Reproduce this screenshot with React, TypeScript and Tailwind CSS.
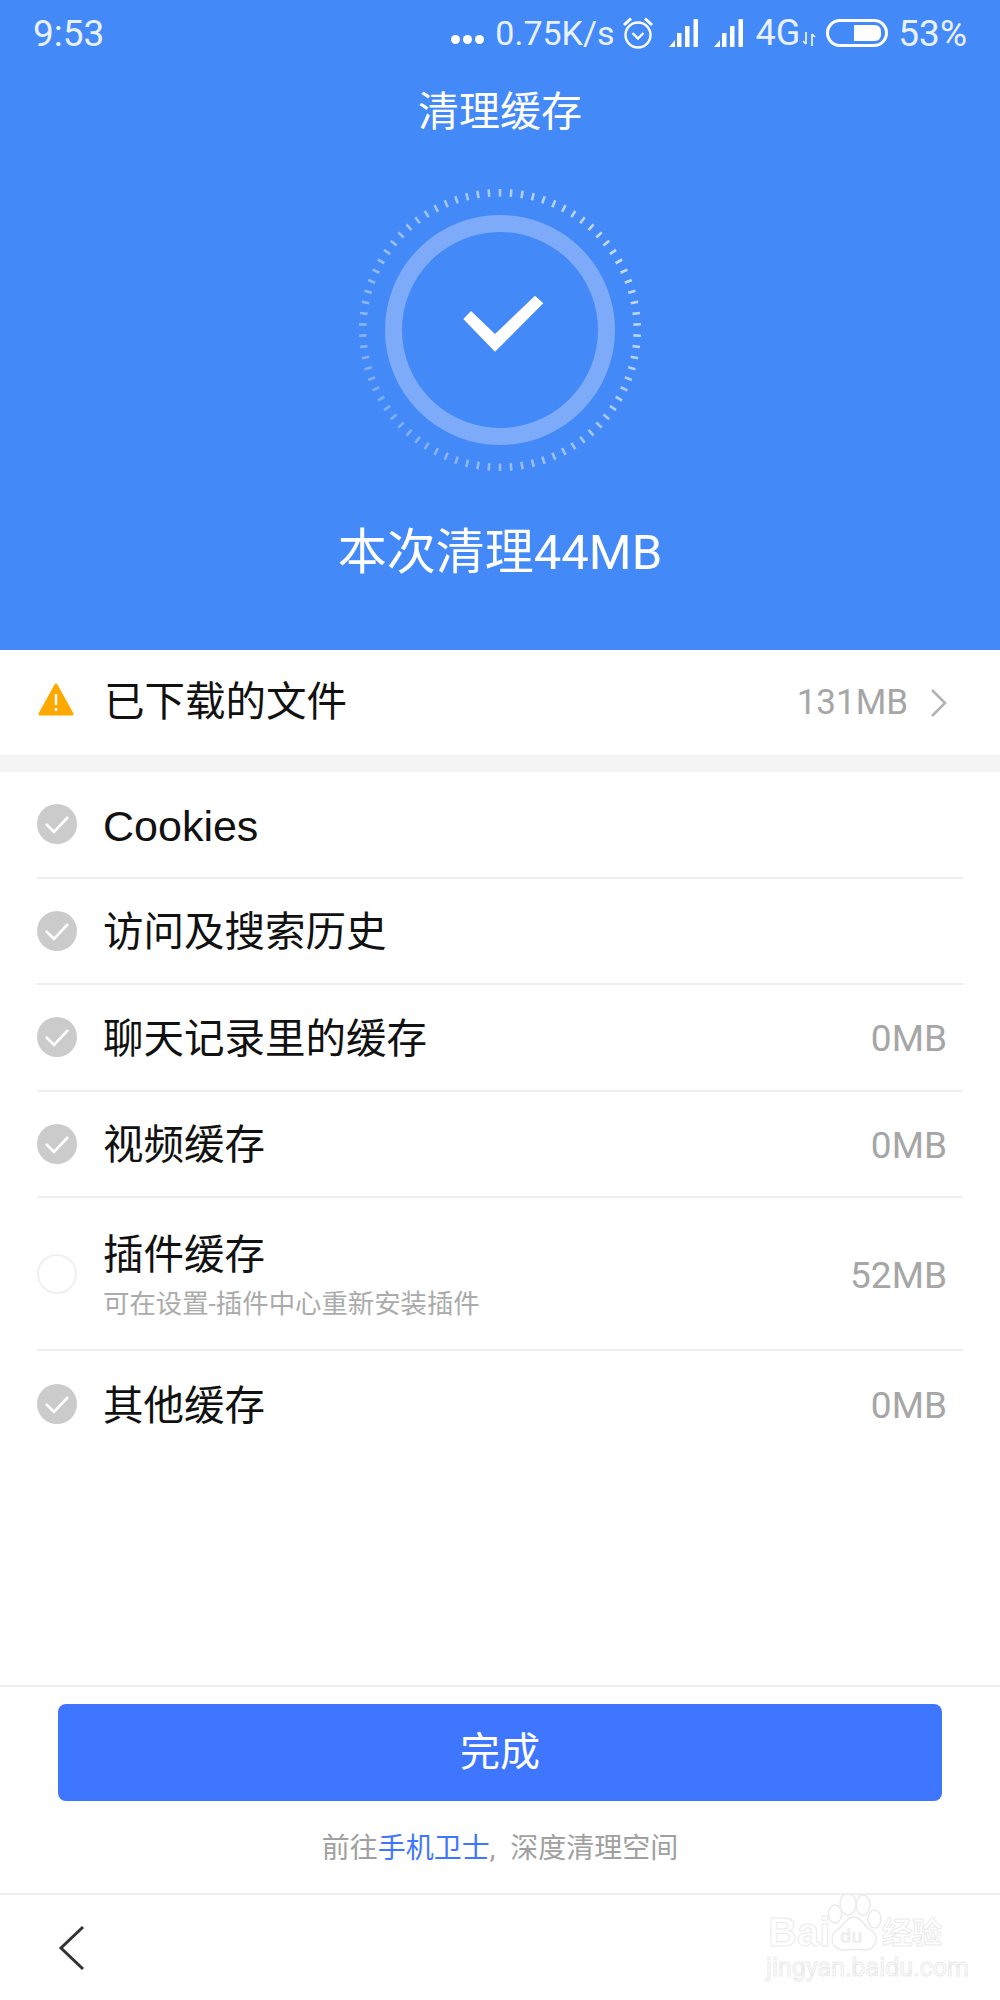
const font = "font-['Roboto','Noto_Sans_CJK_SC',sans-serif]";

const rows = [
  { name: "Cookies", checked: true },
  { name: "访问及搜索历史", checked: true },
  { name: "聊天记录里的缓存", size: "0MB", checked: true },
  { name: "视频缓存", size: "0MB", checked: true },
  { name: "插件缓存", sub: "可在设置-插件中心重新安装插件", size: "52MB", checked: false },
  { name: "其他缓存", size: "0MB", checked: true, last: true },
];

function Signal() {
  return (
    <svg width="30" height="28" viewBox="0 0 30 28" fill="white">
      <path d="M0 28 L6 21 V28 Z" />
      <rect x="8" y="14" width="4.5" height="14" />
      <rect x="16" y="7" width="4.5" height="21" />
      <rect x="24.5" y="0" width="4.5" height="28" rx="1" />
    </svg>
  );
}

function StatusBar() {
  return (
    <div className="flex h-[66px] items-center justify-between pl-[33px] pr-[33px] text-[#e9f1ff]">
      <span className="text-[37px] leading-none">9:53</span>
      <div className="flex items-center">
        <div className="flex gap-[3px] pt-[12px]">
          <span className="h-[9px] w-[9px] rounded-full bg-white" />
          <span className="h-[9px] w-[9px] rounded-full bg-white" />
          <span className="h-[9px] w-[9px] rounded-full bg-white" />
        </div>
        <span className="ml-[11px] text-[34px] leading-none">0.75K/s</span>
        <svg className="ml-[7px]" width="32" height="34" viewBox="0 0 32 34" fill="none" stroke="white" strokeWidth="2.4">
          <circle cx="16" cy="19" r="12.5" />
          <path d="M10.5 17 L16 22.5 L21.5 17" />
          <path d="M2 9 L9 2.5 M30 9 L23 2.5" strokeWidth="3" />
        </svg>
        <div className="ml-[15px]"><Signal /></div>
        <div className="ml-[15px]"><Signal /></div>
        <span className="ml-[12px] text-[36px] leading-none">4G</span>
        <svg className="ml-[2px] mt-[12px]" width="14" height="14" viewBox="0 0 14 14" fill="none" stroke="white" strokeWidth="1.5">
          <path d="M4 0 V12 M1 9 L4 12 M10 14 V2 M13 5 L10 2" />
        </svg>
        <div className="ml-[10px] flex h-[28px] w-[62px] items-center justify-end rounded-full border-[3px] border-white pr-[4px]">
          <span className="h-[16px] w-[27px] rounded-r-[6px] bg-white" />
        </div>
        <span className="ml-[10px] text-[37px] leading-none">53%</span>
      </div>
    </div>
  );
}

function Dial() {
  const ticks = Array.from({ length: 78 }, (_, i) => i);
  return (
    <svg width="300" height="300" viewBox="0 0 300 300">
      {ticks.map((i) => {
        const angle = (i * 360) / 78;
        // the ticks fade out going round from the top right to the bottom left
        const dist = Math.abs(((angle - 60 + 540) % 360) - 180);
        const opacity = 0.7 - (0.4 * (180 - dist)) / 180;
        return (
          <rect
            key={i}
            x="148.7"
            y="9"
            width="2.6"
            height="7.5"
            fill="white"
            opacity={opacity}
            transform={`rotate(${angle + 180} 150 150)`}
          />
        );
      })}
      <circle cx="150" cy="150" r="106.5" fill="none" stroke="#7dabf9" strokeWidth="17" />
      <path d="M113.3 139 L145 171.7 L193.3 123.3 L185 115.7 L145 154 L121 131 Z" fill="white" />
    </svg>
  );
}

function CheckCircle({ checked }: { checked: boolean }) {
  if (!checked) return <span className="h-[40px] w-[40px] shrink-0 rounded-full border-2 border-[#f0f0f0]" />;
  return (
    <svg className="shrink-0" width="40" height="40" viewBox="0 0 40 40">
      <circle cx="20" cy="20" r="20" fill="#cbcbcb" />
      <path d="M9 20 L17 28 L31 13" fill="none" stroke="white" strokeWidth="2.6" />
    </svg>
  );
}

function Watermark() {
  return (
    <div className="absolute left-[760px] top-[1885px] h-[105px] w-[200px] text-white [-webkit-text-stroke:1px_#ebebeb]">
      <svg className="absolute left-[68px] top-[8px]" width="54" height="58" viewBox="0 0 54 58" fill="none" stroke="#ebebeb" strokeWidth="1.5">
        <ellipse cx="7" cy="21" rx="6.5" ry="9" />
        <ellipse cx="20" cy="11" rx="8" ry="11" />
        <ellipse cx="35" cy="12" rx="7" ry="10" />
        <ellipse cx="46.5" cy="26" rx="6.5" ry="9" />
        <path d="M26 24 C18 24 16 33 9 37 C0 43 4 57 16 57 C22 57 30 56 36 57 C48 57 52 44 44 38 C36 34 34 24 26 24 Z" />
      </svg>
      <span className="absolute left-[8px] top-[27px] font-['Liberation_Sans',sans-serif] text-[40px] font-bold leading-none">Bai</span>
      <span className="absolute left-[80px] top-[41px] text-[20px] font-bold leading-none text-[#eeeeee] [-webkit-text-stroke:0px]">du</span>
      <span className="absolute left-[122px] top-[33px] text-[30px] font-bold leading-none">经验</span>
      <span className="absolute left-[6px] top-[70px] text-[25px] leading-none">jingyan.baidu.com</span>
    </div>
  );
}

export default function App() {
  return (
    <div className={`relative flex h-[2000px] w-[1000px] flex-col bg-white ${font}`}>
      <header className="flex h-[650px] shrink-0 flex-col bg-[#4489f8]">
        <StatusBar />
        <h1 className="mt-[26px] text-center text-[41px] font-normal leading-[40px] text-white">清理缓存</h1>
        <div className="mt-[48px] flex justify-center">
          <Dial />
        </div>
        <p className="mt-[45px] text-center text-[49px] leading-[56px] text-white">本次清理44MB</p>
      </header>

      <div className="flex h-[105px] shrink-0 items-center pl-[38px] pr-[51px]">
        <svg className="mb-[5px]" width="36" height="34" viewBox="0 0 36 34">
          <path d="M18 2 L34 31 H2 Z" fill="#ffa900" stroke="#ffa900" strokeWidth="3" strokeLinejoin="round" />
          <rect x="16.8" y="11" width="2.4" height="11" fill="white" />
          <rect x="16.8" y="25" width="2.4" height="3" fill="white" />
        </svg>
        <span className="ml-[30px] text-[40.5px] leading-none text-[#111111]">已下载的文件</span>
        <span className="ml-auto text-[35px] leading-none text-[#a6a6a6]">131MB</span>
        <svg className="ml-[21px]" width="20" height="32" viewBox="0 0 20 32" fill="none" stroke="#b3b3b3" strokeWidth="2.6">
          <path d="M3 3 L16 16 L3 29" />
        </svg>
      </div>
      <div className="h-[17px] shrink-0 bg-[#f4f4f4]" />

      <div className="flex-1 px-[37px]">
        {rows.map((row) => (
          <div
            key={row.name}
            className={`flex items-center ${row.sub ? "h-[153px]" : "h-[106.5px]"} ${row.last ? "" : "border-b-2 border-[#eeeeee]"}`}
          >
            <CheckCircle checked={row.checked} />
            <div className="ml-[26px] flex flex-col pt-[3px]">
              <span className={`leading-[48px] text-[#111111] ${row.name === "Cookies" ? "font-['Liberation_Sans',sans-serif] text-[43px]" : "text-[40.5px]"}`}>{row.name}</span>
              {row.sub && <span className="mt-[9px] text-[26.4px] leading-[32px] text-[#ababab]">{row.sub}</span>}
            </div>
            {row.size && <span className="ml-auto pr-[16px] pt-[3px] text-[37px] leading-none text-[#a6a6a6]">{row.size}</span>}
          </div>
        ))}
      </div>

      <footer className="flex h-[208px] shrink-0 flex-col items-center border-t-2 border-[#eeeeee] px-[58px] pt-[17px]">
        <button className="flex h-[97px] w-full items-center justify-center rounded-[8px] bg-[#3f76ff] text-[40px] text-white">完成</button>
        <p className="mt-[28px] text-[28px] leading-[40px] text-[#a0a0a0]">
          前往<span className="text-[#3f76ff]">手机卫士</span><span className="mr-[8px]">,</span> 深度清理空间
        </p>
      </footer>

      <nav className="flex h-[107px] shrink-0 items-center border-t-2 border-[#efefef] pl-[58px]">
        <svg width="28" height="46" viewBox="0 0 28 46" fill="none" stroke="#333333" strokeWidth="3">
          <path d="M25 2 L3 23 L25 44" />
        </svg>
      </nav>

      <Watermark />
    </div>
  );
}
